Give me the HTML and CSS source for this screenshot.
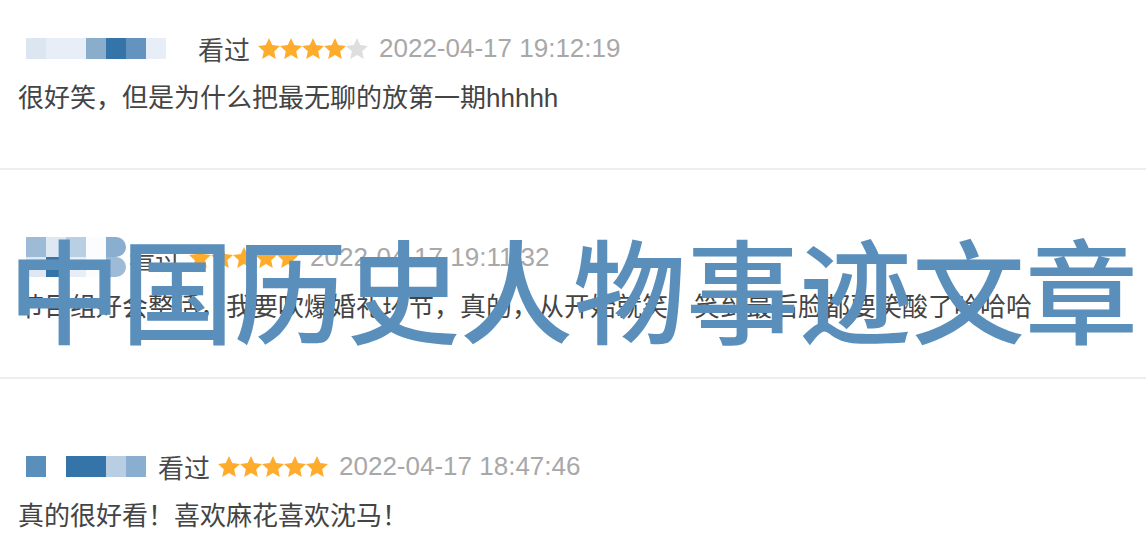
FILE: index.html
```html
<!DOCTYPE html>
<html lang="zh-CN">
<head>
    <meta charset="UTF-8">
    <meta name="viewport" content="width=device-width, initial-scale=1.0">
    <title>评论</title>
    <link rel="stylesheet" href="styles.css">
</head>
<body>
    <div class="comments">
        <div class="comment first">
            <div class="head">
                <div class="name name-1">
                    <span class="px c1"></span><span class="px c2 w2"></span><span class="px c3"></span><span class="px c4"></span><span class="px c5"></span><span class="px c2"></span>
                </div>
                <span class="status">看过</span>
                <span class="stars">
                    <svg class="star on" viewBox="1 1 22 21"><polygon points="12,1 15.2,8.1 23,8.9 17.2,14.2 18.8,21.9 12,18 5.2,21.9 6.8,14.2 1,8.9 8.8,8.1"/></svg>
                    <svg class="star on" viewBox="1 1 22 21"><polygon points="12,1 15.2,8.1 23,8.9 17.2,14.2 18.8,21.9 12,18 5.2,21.9 6.8,14.2 1,8.9 8.8,8.1"/></svg>
                    <svg class="star on" viewBox="1 1 22 21"><polygon points="12,1 15.2,8.1 23,8.9 17.2,14.2 18.8,21.9 12,18 5.2,21.9 6.8,14.2 1,8.9 8.8,8.1"/></svg>
                    <svg class="star on" viewBox="1 1 22 21"><polygon points="12,1 15.2,8.1 23,8.9 17.2,14.2 18.8,21.9 12,18 5.2,21.9 6.8,14.2 1,8.9 8.8,8.1"/></svg>
                    <svg class="star" viewBox="1 1 22 21"><polygon points="12,1 15.2,8.1 23,8.9 17.2,14.2 18.8,21.9 12,18 5.2,21.9 6.8,14.2 1,8.9 8.8,8.1"/></svg>
                </span>
                <span class="time">2022-04-17 19:12:19</span>
            </div>
            <p class="text">很好笑，但是为什么把最无聊的放第一期hhhhh</p>
        </div>

        <div class="comment">
            <div class="head">
                <div class="name name-2 tall">
                    <div class="px-row">
                        <span class="px c6"></span><span class="px c7"></span><span class="px c8"></span><span class="px c9"></span><span class="px c10 round"></span>
                    </div>
                    <div class="px-row">
                        <span class="px c7"></span><span class="px c4"></span><span class="px c2"></span><span class="px c9"></span><span class="px c6 round"></span>
                    </div>
                </div>
                <span class="status">看过</span>
                <span class="stars">
                    <svg class="star on" viewBox="1 1 22 21"><polygon points="12,1 15.2,8.1 23,8.9 17.2,14.2 18.8,21.9 12,18 5.2,21.9 6.8,14.2 1,8.9 8.8,8.1"/></svg>
                    <svg class="star on" viewBox="1 1 22 21"><polygon points="12,1 15.2,8.1 23,8.9 17.2,14.2 18.8,21.9 12,18 5.2,21.9 6.8,14.2 1,8.9 8.8,8.1"/></svg>
                    <svg class="star on" viewBox="1 1 22 21"><polygon points="12,1 15.2,8.1 23,8.9 17.2,14.2 18.8,21.9 12,18 5.2,21.9 6.8,14.2 1,8.9 8.8,8.1"/></svg>
                    <svg class="star on" viewBox="1 1 22 21"><polygon points="12,1 15.2,8.1 23,8.9 17.2,14.2 18.8,21.9 12,18 5.2,21.9 6.8,14.2 1,8.9 8.8,8.1"/></svg>
                    <svg class="star on" viewBox="1 1 22 21"><polygon points="12,1 15.2,8.1 23,8.9 17.2,14.2 18.8,21.9 12,18 5.2,21.9 6.8,14.2 1,8.9 8.8,8.1"/></svg>
                </span>
                <span class="time">2022-04-17 19:11:32</span>
            </div>
            <p class="text">节目组好会整活，我要吹爆婚礼环节，真的，从开始就笑，笑到最后脸都要笑酸了哈哈哈</p>
        </div>

        <div class="comment">
            <div class="head">
                <div class="name name-3">
                    <span class="px c11"></span><span class="px blank"></span><span class="px c4 w2"></span><span class="px c12"></span><span class="px c10"></span>
                </div>
                <span class="status">看过</span>
                <span class="stars">
                    <svg class="star on" viewBox="1 1 22 21"><polygon points="12,1 15.2,8.1 23,8.9 17.2,14.2 18.8,21.9 12,18 5.2,21.9 6.8,14.2 1,8.9 8.8,8.1"/></svg>
                    <svg class="star on" viewBox="1 1 22 21"><polygon points="12,1 15.2,8.1 23,8.9 17.2,14.2 18.8,21.9 12,18 5.2,21.9 6.8,14.2 1,8.9 8.8,8.1"/></svg>
                    <svg class="star on" viewBox="1 1 22 21"><polygon points="12,1 15.2,8.1 23,8.9 17.2,14.2 18.8,21.9 12,18 5.2,21.9 6.8,14.2 1,8.9 8.8,8.1"/></svg>
                    <svg class="star on" viewBox="1 1 22 21"><polygon points="12,1 15.2,8.1 23,8.9 17.2,14.2 18.8,21.9 12,18 5.2,21.9 6.8,14.2 1,8.9 8.8,8.1"/></svg>
                    <svg class="star on" viewBox="1 1 22 21"><polygon points="12,1 15.2,8.1 23,8.9 17.2,14.2 18.8,21.9 12,18 5.2,21.9 6.8,14.2 1,8.9 8.8,8.1"/></svg>
                </span>
                <span class="time">2022-04-17 18:47:46</span>
            </div>
            <p class="text">真的很好看！喜欢麻花喜欢沈马！</p>
        </div>
    </div>

    <div class="watermark">中国历史人物事迹文章</div>
</body>
</html>
```

FILE: styles.css
```css
body {
    margin: 0;
    padding: 0;
    background-color: #fff;
    font-family: "Liberation Sans", "Noto Sans CJK SC", sans-serif;
    font-size: 26px;
    color: #444;
    overflow: hidden;
}
.comment {
    padding: 67px 0 50px 18px;
    border-bottom: 2px solid #eeeeee;
}
.comment.first {
    padding-top: 28px;
}
.head {
    display: flex;
    align-items: center;
    height: 40px;
}
.name {
    display: flex;
    flex-shrink: 0;
    margin-left: 8px;
    height: 21px;
}
.name.tall {
    flex-direction: column;
    height: 40px;
}
.name-1 { width: 172px; }
.name-2 { width: 103px; }
.name-3 { width: 132px; }
.px-row {
    display: flex;
    height: 20px;
}
.px {
    display: block;
    width: 20px;
    height: 100%;
    flex-shrink: 0;
}
.px.w2 { width: 40px; }
.px.round { border-radius: 0 10px 10px 0; }
.c1 { background-color: #dce6f1; }
.c2 { background-color: #e8eef7; }
.c3 { background-color: #8aadcc; }
.c4 { background-color: #3574a8; }
.c5 { background-color: #6593bf; }
.c6 { background-color: #9dbad6; }
.c7 { background-color: #dfe8f2; }
.c8 { background-color: #b9cfe3; }
.c9 { background-color: #fbfcfe; }
.c10 { background-color: #8aaecf; }
.c11 { background-color: #5b8fbb; }
.c12 { background-color: #b8cfe3; }
.blank { background-color: transparent; }
.status {
    color: #494949;
    margin-right: 8px;
}
.stars {
    display: flex;
    margin-right: 11px;
}
.star {
    width: 22px;
    height: 21px;
    fill: #dedede;
}
.star.on {
    fill: #ffac2d;
}
.time {
    color: #a8a8a8;
    white-space: nowrap;
}
.text {
    margin: 10px 0 0;
    line-height: 40px;
    white-space: nowrap;
}
.watermark {
    position: absolute;
    top: 230px;
    left: 0;
    right: 0;
    text-align: center;
    font-family: "Noto Sans CJK SC", sans-serif;
    font-weight: 500;
    font-size: 113px;
    line-height: 113px;
    color: #5a8fbb;
    white-space: nowrap;
}
```
